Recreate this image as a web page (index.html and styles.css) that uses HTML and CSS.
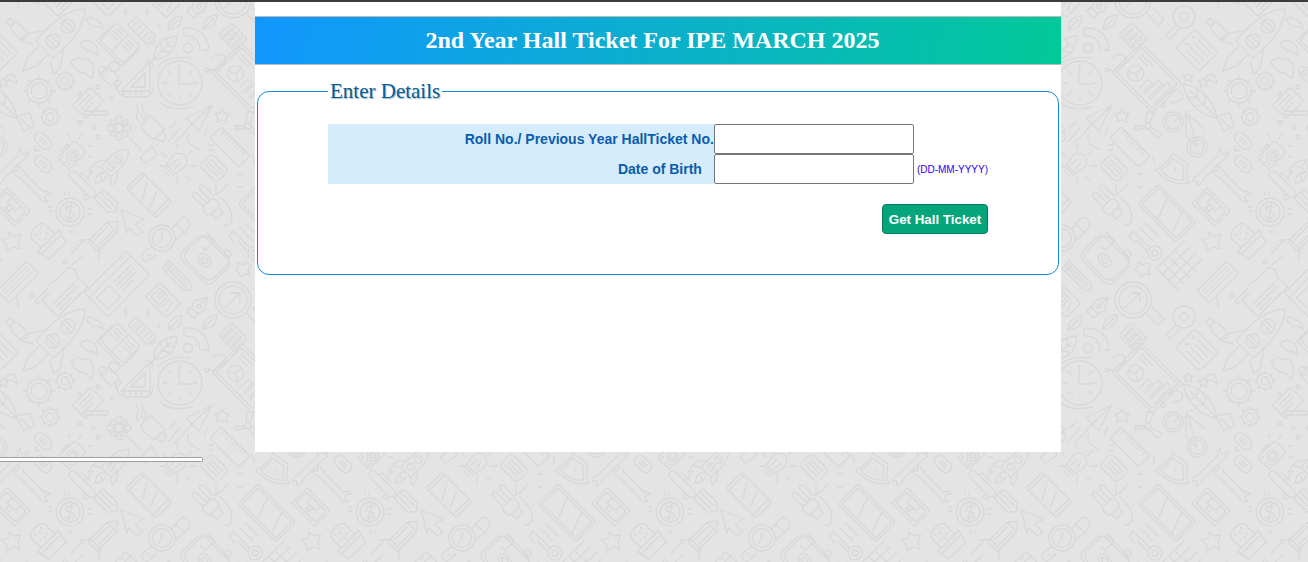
FILE: index.html
```html
<!DOCTYPE html>
<html lang="en">

<head>
    <meta charset="UTF-8">
    <meta name="viewport" content="width=device-width, initial-scale=1.0">
    <title>Hall Ticket</title>
    <link rel="stylesheet" href="styles.css">
</head>

<body>
    <!-- doodle wallpaper, one 300x300 tile -->
    <svg class="wallpaper" xmlns="http://www.w3.org/2000/svg" aria-hidden="true">
        <defs>
            <g id="doodles" fill="none" stroke="#d8d8d8" stroke-width="1.3" stroke-linecap="round" stroke-linejoin="round">
                <!-- rocket -->
                <g transform="translate(53 41) rotate(45)"><path d="M0-45C11-34 15-16 12 12H-12C-15-16-11-34 0-45Z"/><circle cy="-21" r="7"/><circle r="7"/><path d="M-7-23H7M-7-19H7M-7-2H7M-7 2H7M-12-4L-24 14V23L-12 16M12-4L24 14V23L12 16M-6 14V30L0 43L6 30V14"/></g>
                <!-- usb -->
                <g transform="translate(16 28) rotate(45) scale(.63)" stroke-width="2"><rect x="-8" y="-8" width="30" height="16" rx="7"/><rect x="-18" y="-5" width="10" height="10" rx="1"/></g>
                <!-- clouds -->
                <path d="M86 19Q92 15 95 20Q101 20 103 29L98 26Q92 28 86 19Z"/>
                <path d="M80 44Q88 37 92 43Q97 42 98 56L93 52Q86 52 80 44Z"/>
                <path d="M71 62Q78 55 84 60Q90 57 92 64Q95 68 92 79L85 73Q75 72 71 62Z"/>
                <!-- battery -->
                <g transform="translate(143 32) rotate(45) scale(.74)" stroke-width="1.7"><rect x="-21" y="-8" width="38" height="16" rx="2"/><path d="M17-3H21V3H17M-15-5V5M-8-5V5M-1-5V5M6-5V5M12-5V5"/></g>
                <path d="M126 8L124 12H127L125 16M148 9L146 13H149L147 17M159 23V28"/>
                <!-- photo frame -->
                <g transform="translate(163 0) rotate(45) scale(.78)" stroke-width="1.7"><rect x="-19" y="-13" width="38" height="26" rx="4"/><rect x="-14" y="-8" width="15" height="16" rx="1"/><circle cx="-7" cy="-2" r="3"/><path d="M5-8V8M9-6L14 6"/></g>
                <!-- pen nib -->
                <g transform="translate(198 7) rotate(45)"><path d="M0-14L7-2L4 5H-4L-7-2Z"/><circle cy="-1" r="2"/><path d="M0-14V-3M-5 5V11H5V5"/></g>
                <!-- leaves -->
                <g transform="translate(175 23) rotate(45)"><path d="M0-10Q9 0 0 10Q-9 0 0-10ZM0-5V10"/></g>
                <g transform="translate(210 22) rotate(45)"><path d="M0-10Q9 0 0 10Q-9 0 0-10ZM0-5V10"/></g>
                <g transform="translate(165 48) rotate(45)"><path d="M0-17Q15 0 0 16Q-15 0 0-17ZM0-8V20M0-3L5-7M0-3L-5-7M0 4L6 0M0 4L-6 0"/></g>
                <!-- wifi -->
                <circle cx="188" cy="48" r="4.5"/>
                <path d="M186 36Q199 36 200 50M186 28Q207 28 209 50H204M184 28V36"/>
                <!-- calculator -->
                <g transform="translate(233 37) rotate(45) scale(.7)" stroke-width="1.8"><rect x="-16" y="-13" width="32" height="26" rx="4"/><circle cx="-9" cy="-6" r="2.4"/><circle cy="-6" r="2.4"/><circle cx="9" cy="-6" r="2.4"/><circle cx="-9" cy="1" r="2.4"/><circle cy="1" r="2.4"/><circle cx="9" cy="1" r="2.4"/><circle cx="-9" cy="8" r="2.4"/><circle cy="8" r="2.4"/><circle cx="9" cy="8" r="2.4"/></g>
                <!-- question marks -->
                <path d="M212 58Q218 52 224 56Q228 62 222 65Q217 66 215 71L210 70"/><circle cx="207" cy="70" r="2"/>
                <path d="M269 94Q275 88 281 92Q285 98 279 101Q274 102 272 103"/><circle cx="263" cy="105" r="2"/>
                <!-- clock -->
                <circle cx="180" cy="83" r="22"/>
                <path d="M158 66Q170 55 191 58M160 102Q170 112 192 107M179 67V84H191M180 65V69M180 97V101M163 83H167M193 83H197M168 71L171 74M192 71L189 74M168 95L171 92M192 95L189 92"/>
                <!-- tablet with chart -->
                <g transform="translate(247 78) rotate(45) scale(.8)" stroke-width="1.6"><rect x="-36" y="-26" width="72" height="52" rx="3"/><rect x="-32" y="-22" width="64" height="44" rx="1"/><circle cx="-14" cy="6" r="10"/><path d="M-14 6V-4M-14 6L-5 11M-14 6L-23 11M2 16V0H9V16M12 16V-8H19V16M22 16V-14H29V16M-26-16H-6M-26-11H-10"/></g>
                <!-- checklist sheet -->
                <g transform="translate(297 50) rotate(45) scale(.88)" stroke-width="1.5"><rect x="-19" y="-15" width="38" height="30" rx="3"/><path d="M-8-9H14M-8-3H14M-8 3H14M-8 9H14M-15-8L-13-6L-11-10M-15 3L-13 5L-11 1"/></g>
                <!-- magnifiers -->
                <circle cx="284" cy="17" r="11"/><circle cx="284" cy="17" r="4"/>
                <path d="M276 25L266 35L270 39L280 29"/>
                <circle cx="233" cy="0" r="18"/><circle cx="233" cy="0" r="14"/><path d="M225 8L239 -6M231-7H240V2M246 13L258 25L264 19L252 7"/>
                <!-- book -->
                <g transform="translate(120 43) rotate(45) scale(.75)" stroke-width="1.7"><rect x="-22" y="-16" width="44" height="32" rx="2"/><path d="M0-16V16M-17-10H-5M-17-5H-5M-17 0H-5M5-10H17M5-5H17M5 0H17M-24-10V20H24V-10"/></g>
                <!-- set square, reel, gears -->
                <path d="M121 91L150 62V91ZM131 87L145 73V87ZM124 91V95M130 91V95M136 91V95M142 91V95M150 91V95M116 85Q117 95 126 97H146Q153 96 153 87"/>
                <path d="M146 60Q152 60 153 66"/>
                <circle cx="114" cy="67" r="5"/><circle cx="103" cy="71" r="4"/>
                <g transform="translate(111 75) rotate(45)"><rect x="-8" y="-4" width="16" height="12" rx="2"/><path d="M8 0L13-3V6L8 3"/></g>
                <circle cx="39" cy="91" r="8"/><circle cx="39" cy="91" r="12"/><path d="M39 75V79M39 103V107M23 91H27M51 91H55M28 80L31 83M50 80L47 83M28 102L31 99M50 102L47 99"/>
                <circle cx="65" cy="81" r="4"/><circle cx="65" cy="81" r="8"/><path d="M65 71V73M65 89V91M55 81H57M73 81H75M58 74L60 76M72 74L70 76M58 88L60 86M72 88L70 86"/>
                <circle cx="50" cy="117" r="4"/><circle cx="50" cy="117" r="8"/><path d="M50 107V109M50 125V127M40 117H42M58 117H60M43 110L45 112M57 110L55 112M43 124L45 122M57 124L55 122"/>
                <!-- stars and small cloud -->
                <path d="M3 78L5 81H8L6 84L7 87L3 85L0 87L1 84L-2 81H1Z"/>
                <path d="M288 73L290 76H293L291 79L292 82L288 80L285 82L286 79L283 76H286Z"/>
                <path d="M5 78Q12 70 16 78L17 84L11 80Q8 81 5 78Z"/>
                <path d="M222 109L224 113L229 114L226 118L227 122L222 120L217 122L218 118L215 114L220 113Z"/>
                <!-- leaf and pot -->
                <g transform="translate(2 103) rotate(-45)"><path d="M0-27Q16-4 0 22Q-16-4 0-27ZM0-17V22M0-8L7-13M0-8L-7-13M0 3L8-3M0 3L-8-3"/></g>
                <path d="M16 116L30 113L34 126L24 131ZM20 118L30 128"/>
                <!-- sheet with pen -->
                <g transform="translate(88 103) rotate(-45) scale(.8)" stroke-width="1.6"><rect x="-16" y="-12" width="32" height="24" rx="2"/><path d="M-10-6H10M-10-1H10M-10 4H4"/></g>
                <rect x="84" y="111" width="24" height="4" rx="2"/>
                <circle cx="98" cy="87" r="2"/><circle cx="80" cy="123" r="2"/><path d="M78 92L81 95M81 92L78 95M110 97L113 100M113 97L110 100M92 126L95 129M95 126L92 129"/>
                <circle cx="98" cy="137" r="2"/>
                <!-- flower on stem -->
                <circle cx="119" cy="128" r="4"/>
                <path d="M119 124Q113 117 119 116Q125 117 119 124M123 128Q130 122 131 128Q130 134 123 128M119 132Q125 139 119 140Q113 139 119 132M115 128Q108 134 107 128Q108 122 115 128M122 125Q123 118 128 120Q129 124 122 125M116 125Q109 124 110 120Q115 118 116 125M122 131Q129 132 128 136Q123 138 122 131M116 131Q115 138 110 136Q109 132 116 131"/>
                <path d="M129 138L142 151M140 158L152 146L157 155L146 163Z"/>
                <!-- mug -->
                <g transform="translate(153 127) rotate(45) scale(.72)" stroke-width="1.8"><path d="M-14-9H14V5Q14 13 6 13H-6Q-14 13-14 5Z"/><path d="M14-5Q24-5 24 2Q24 8 14 8"/></g>
                <path d="M136 105Q140 110 137 114Q135 118 139 121M141 103Q145 108 142 112Q140 116 144 119M145 112Q147 116 145 119"/>
                <!-- paper plane -->
                <path d="M212 105L186 118L192 124ZM212 105L199 131L192 124ZM192 124L185 132M180 128L168 142M185 133L174 143M189 134Q186 138 190 144L200 150"/>
                <path d="M170 128L176 122"/>
                <!-- windmill -->
                <circle cx="248" cy="126" r="3"/><path d="M250 123L254 112H247L246 123M251 127L262 134L258 138L248 129M245 126H235V130L246 128"/>
                <!-- bicycle -->
                <circle cx="273" cy="122" r="10"/><circle cx="273" cy="122" r="7"/><circle cx="297" cy="147" r="10"/><circle cx="297" cy="147" r="7"/>
                <path d="M273 122L288 115L297 147L286 137V112L293 110M288 115L305 129"/>
                <!-- ruler -->
                <g transform="translate(230 147) rotate(45) scale(.73)" stroke-width="1.8"><rect x="-28" y="-11" width="56" height="22" rx="3"/><path d="M-21-11V-4M-16-11V-6M-11-11V-4M-6-11V-6M-1-11V-4M4-11V-6M9-11V-4M14-11V-6M19-11V-4"/></g>
                <path d="M205 135Q206 130 208 127M252 155Q255 160 254 163"/>
                <!-- shield -->
                <path d="M273 153L288 164Q285 178 289 183Q276 186 263 177Q257 172 256 170Q266 165 273 153Z"/>
                <path d="M272 158L284 166Q282 175 284 180Q274 181 266 175Q262 172 261 170Q268 166 272 158ZM276 168L275 171"/>
                <!-- wrenches -->
                <g transform="translate(12 166) rotate(-45) scale(.85)" stroke-width="1.5"><path d="M-19-4H14Q16-9 22-8L18-4L20 1L25 0Q23 7 14 4H-19Q-25 7-29 4L-25 0L-29-4Q-25-7-19-4Z"/></g>
                <g transform="translate(33 186) rotate(45) scale(.85)" stroke-width="1.5"><path d="M-19-4H14Q16-9 22-8L18-4L20 1L25 0Q23 7 14 4H-19Q-25 7-29 4L-25 0L-29-4Q-25-7-19-4Z"/></g>
                <!-- speech bubbles -->
                <g transform="translate(43 141) rotate(45) scale(.7)" stroke-width="1.9"><rect x="-14" y="-8" width="28" height="16" rx="8"/><path d="M-6-2H6M-6 2H6"/></g>
                <path d="M36 146L35 151L40 150"/>
                <g transform="translate(43 164) rotate(45) scale(.7)" stroke-width="1.9"><rect x="-14" y="-8" width="28" height="16" rx="8"/><path d="M-6-2H6M-6 2H6"/></g>
                <!-- camera -->
                <g transform="translate(72 155) rotate(-45) scale(.82)" stroke-width="1.6"><rect x="-15" y="-10" width="30" height="20" rx="3"/><circle cy="1" r="7"/><circle cy="1" r="3.5"/><path d="M-6-10V-13H5V-10M-13-6H-9M-13 1H-9M-13 6H-9"/></g>
                <path d="M92 166L88 172L93 171L86 180M89 157H92M68 134L70 138M82 133L79 139M89 146H92"/>
                <!-- small rocket -->
                <g transform="translate(113 165) rotate(45) scale(.85)" stroke-width="1.5"><path d="M0-26C9-18 10-6 8 12H-8C-10-6-9-18 0-26Z"/><circle cy="-9" r="4.5"/><circle cy="3" r="4.5"/><path d="M-4-10H4M-4 2H4M-8 0L-16 10V18L-8 12M8 0L16 10V18L8 12"/></g>
                <path d="M105 172Q96 173 95 183Q104 183 106 176M100 176Q102 179 103 181"/>
                <!-- bulb -->
                <g transform="translate(177 163) rotate(45) scale(.85)" stroke-width="1.5"><path d="M-8 5Q-13-10 0-13Q13-10 8 5V10H-8ZM-7 13H7M-4 17H4M-3 6V-3M3 6V-3"/></g>
                <path d="M160 166H165M190 166H197M177 144V149M177 176V183M162 153L166 157M192 151L188 155M190 180L186 177"/>
                <!-- sandwich with tail -->
                <g transform="translate(214 168) rotate(45) scale(.72)" stroke-width="1.8"><rect x="-17" y="-12" width="34" height="24" rx="6"/><path d="M-12-5H12M-12 0H12M-12 5H12"/></g>
                <path d="M216 184L216 195L224 189L228 183"/>
                <path d="M238 174H242M238 187H242"/>
                <path d="M209 145H213M209 150H213"/>
                <!-- pill thing -->
                <g transform="translate(82 184) rotate(45)"><rect x="-17" y="-4" width="34" height="8" rx="4"/><path d="M-8-4V-8H4"/></g>
                <circle cx="86" cy="197" r="2.5"/>
                <!-- phone -->
                <g transform="translate(149 195) rotate(45) scale(.7)" stroke-width="1.9"><rect x="-30" y="-16" width="60" height="32" rx="4"/><path d="M-25-16V16M24-16V16M-15-11L-2 11M5-11L13 11"/></g>
                <!-- pencil stub -->
                <g transform="translate(107 202) rotate(45) scale(.75)" stroke-width="1.7"><path d="M-15-9H10L18 0L10 9H-15Q-18 0-15-9ZM-15-3H10M-15 3H10"/></g>
                <!-- cfl bulb -->
                <g transform="translate(207 203) rotate(45) scale(.9)" stroke-width="1.5"><path d="M-16-11H0M-16-5H0M-16 0H0M-16 6H0M-16-11Q-22-8-16-5M-16 0Q-22 3-16 6"/><rect x="0" y="-9" width="12" height="18" rx="4"/><path d="M12-5H20V5H12"/></g>
                <path d="M220 197Q232 207 232 218Q232 226 224 225"/>
                <!-- striped tablet -->
                <g transform="translate(267 213) rotate(45) scale(.7)" stroke-width="1.9"><rect x="-38" y="-20" width="76" height="40" rx="4"/><rect x="-34" y="-16" width="68" height="32" rx="2"/><path d="M-15-16L-3 16M14-16L26 16"/></g>
                <path d="M245 223L258 236M240 228L253 241"/>
                <!-- key -->
                <circle cx="255" cy="253" r="7"/><circle cx="255" cy="253" r="3"/><path d="M250 248L233 231L229 236L235 243M247 251L238 241"/>
                <!-- hash -->
                <g transform="translate(-13 13)"><path d="M277 251L297 271M283 245L303 265M289 239L309 259M271 257L291 277M275 262L303 234M281 268L309 240M287 274L315 246M269 256L297 228"/></g>
                <path d="M238 262L243 265L247 262L251 266L248 270L250 275L245 274L241 277L239 272L235 270L238 267Z"/>
                <!-- toolbox -->
                <g transform="translate(11 207) rotate(45) scale(.68)" stroke-width="2"><rect x="-24" y="-16" width="48" height="32" rx="3"/><rect x="-20" y="-11" width="40" height="22" rx="2"/><path d="M-9-11V-1H9V-11M-4 0V7H3V0"/></g>
                <!-- coin -->
                <circle cx="70" cy="212" r="14"/><circle cx="70" cy="212" r="10"/>
                <path d="M74 207Q69 204 66 208Q66 212 71 212Q75 214 74 217Q70 220 66 217M72 203L68 221"/>
                <path d="M49 207H52M49 211H52M88 209H91M88 214H91M65 192V195M69 192V195M72 232V234M76 232V234"/>
                <!-- cursor -->
                <path d="M121 210L144 219L135 224L143 232L137 236L129 228L127 233Z"/>
                <!-- watch -->
                <circle cx="162" cy="238" r="13"/><circle cx="162" cy="238" r="9.5"/>
                <path d="M162 232V238L159 243M172 229L180 219Q184 216 187 219L190 224Q190 228 187 230L176 240M175 224L186 234M152 247L146 250Q141 254 142 258Q144 262 148 261L156 254M148 254L150 256"/>
                <!-- cactus -->
                <g transform="translate(47 240) rotate(-45) scale(.75)" stroke-width="1.8"><path d="M-13 2V-15Q-13-23 0-23Q13-23 13-15V2M-20 2H20L16 20H-16Z"/><path d="M-6-18V-15M0-15V-12M6-18V-15M-6-8V-5M0-5V-2M6-8V-5M-17 8H17"/></g>
                <!-- star -->
                <path d="M9 232L14 236L21 235L18 242L20 249L13 247L7 251L6 244L1 240L8 238Z"/>
                <!-- pencil rocket -->
                <g transform="translate(101 238) rotate(45) scale(.85)" stroke-width="1.5"><path d="M0-28L8-18V10H-8V-18ZM-8-18H8M-4-15V7M4-15V7M-8 10L-16 20M8 10L16 20M-8 10V14H8V10"/></g>
                <path d="M84 240L71 254M83 255L72 265M70 230L70 233"/>
                <!-- big camera -->
                <g transform="translate(207 258) rotate(45) scale(.68)" stroke-width="1.9"><rect x="-28" y="-24" width="56" height="48" rx="10"/><rect x="-32" y="-20" width="64" height="48" rx="10"/><ellipse cy="5" rx="11" ry="8"/><ellipse cy="5" rx="5" ry="4"/><path d="M-26-26H-10V-6H-18"/><rect x="12" y="-30" width="10" height="8" rx="2"/></g>
                <!-- big pencil -->
                <g transform="translate(178 277) rotate(45) scale(.72)" stroke-width="1.8"><path d="M-25-7H18L26 0L18 7H-25ZM-25-2H18M-25 2H18M-18-7V7"/></g>
                <!-- browser window -->
                <g transform="translate(117 284) rotate(-45) scale(.67)" stroke-width="2"><rect x="-44" y="-25" width="88" height="50" rx="2"/><path d="M-44-15H44M-2-5H34M-2 1H34M-2 7H34M-2 13H20M30-21L35-21"/><rect x="-36" y="-7" width="26" height="24"/></g>
                <!-- scroll -->
                <g transform="translate(61 292) rotate(-45) scale(.75)" stroke-width="1.8"><path d="M-30-10Q-38-14-30-16H-10Q-4-20 4-16H30Q38-8 30 0V20H-26V-10H-10"/><path d="M-18 4H20M-18 10H20M-18 15H4"/></g>
                <circle cx="65" cy="262" r="2"/>
                <!-- keyboard -->
                <g transform="translate(18 282) rotate(-45) scale(.62)" stroke-width="2.1"><rect x="-34" y="-14" width="68" height="28" rx="4"/><path d="M-28-7H28M-28-1H28M-28 5H28" stroke-dasharray="2 3"/><path d="M-18 14L-28 30"/></g>
                <circle cx="32" cy="296" r="2"/>
            </g>
            <pattern id="tile" width="300" height="300" patternUnits="userSpaceOnUse">
                <use href="#doodles" x="-300" y="-300"/>
                <use href="#doodles" y="-300"/>
                <use href="#doodles" x="300" y="-300"/>
                <use href="#doodles" x="-300"/>
                <use href="#doodles"/>
                <use href="#doodles" x="300"/>
                <use href="#doodles" x="-300" y="300"/>
                <use href="#doodles" y="300"/>
                <use href="#doodles" x="300" y="300"/>
            </pattern>
        </defs>
        <rect width="100%" height="100%" fill="#e4e4e4"/>
        <rect width="100%" height="100%" fill="url(#tile)"/>
    </svg>

    <div class="topline"></div>

    <div class="page">
        <div class="title-bar">
            <h1>2nd Year Hall Ticket For IPE MARCH 2025</h1>
        </div>

        <fieldset class="details">
            <legend>Enter Details</legend>
            <form onsubmit="return false">
                <table class="details-table">
                    <tr>
                        <th>Roll No./ Previous Year HallTicket No.</th>
                        <td class="input-cell"><input type="text" class="field"></td>
                        <td></td>
                    </tr>
                    <tr>
                        <th class="dob">Date of Birth</th>
                        <td class="input-cell"><input type="text" class="field"></td>
                        <td class="hint">(DD-MM-YYYY)</td>
                    </tr>
                    <tr>
                        <td colspan="3" class="submit-cell">
                            <button type="submit" class="btn-ticket">Get Hall Ticket</button>
                        </td>
                    </tr>
                </table>
            </form>
        </fieldset>
    </div>

    <div class="stray-bar"></div>
</body>

</html>
```

FILE: styles.css
```css
html,
body {
    margin: 0;
    padding: 0;
}

body {
    font-family: "Liberation Sans", Arial, sans-serif;
    height: 562px;
    overflow: hidden;
}

.wallpaper {
    position: fixed;
    top: 0;
    left: 0;
    width: 100%;
    height: 100%;
    z-index: -1;
}

.topline {
    height: 2px;
    background-color: #3c3c3c;
}

.page {
    width: 806px;
    height: 450px;
    margin-left: 255px;
    padding-top: 14px;
    box-sizing: border-box;
    background-color: #fff;
}

.title-bar {
    height: 49px;
    box-sizing: border-box;
    border-top: 1px solid #bbb;
    border-bottom: 1px solid #bbb;
    background: linear-gradient(100deg, #1296ff 0%, #03c999 100%);
    padding-right: 11px;
    display: flex;
    align-items: center;
    justify-content: center;
}

.title-bar h1 {
    margin: 0;
    color: #fff;
    font-family: "Liberation Serif", "Times New Roman", serif;
    font-size: 24px;
    font-weight: bold;
}

.details {
    margin: 14px 2px 0;
    padding: 20px 70px 40px;
    border: 1px solid #1b87d0;
    border-radius: 12px;
}

.details legend {
    margin-left: 0;
    padding: 0 2px;
    color: #0b5c8f;
    font-family: "Liberation Serif", "Times New Roman", serif;
    font-size: 21px;
    text-shadow: 1px 1px 1px #9fbcd0;
}

.details-table {
    width: 660px;
    border-collapse: collapse;
}

.details-table th {
    width: 386px;
    padding: 0;
    background-color: #d5ecfd;
    color: #0b5cab;
    font-size: 14px;
    text-align: right;
    white-space: nowrap;
}

.details-table th.dob {
    padding-right: 12px;
}

.input-cell {
    width: 200px;
    padding: 0;
    line-height: 0;
}

.field {
    width: 200px;
    height: 30px;
    box-sizing: border-box;
    margin: 0;
    border: 1px solid #767676;
    border-radius: 2px;
    background-color: #fff;
}

.hint {
    padding: 0 0 0 3px;
    color: #2a00ff;
    font-size: 10px;
    white-space: nowrap;
}

.submit-cell {
    padding: 20px 0 0;
    text-align: right;
    line-height: 0;
}

.btn-ticket {
    width: 106px;
    height: 30px;
    padding: 0;
    border: 1px solid #0a7a5e;
    border-radius: 4px;
    background-color: #04a57a;
    color: #fff;
    font-family: "Liberation Sans", Arial, sans-serif;
    font-size: 13.33px;
    font-weight: bold;
}

.stray-bar {
    width: 203px;
    height: 5px;
    box-sizing: border-box;
    margin-top: 5px;
    border: 1px solid #a0a0a0;
    border-left: 0;
    border-radius: 0 2px 2px 0;
    background-color: #fff;
}
```
